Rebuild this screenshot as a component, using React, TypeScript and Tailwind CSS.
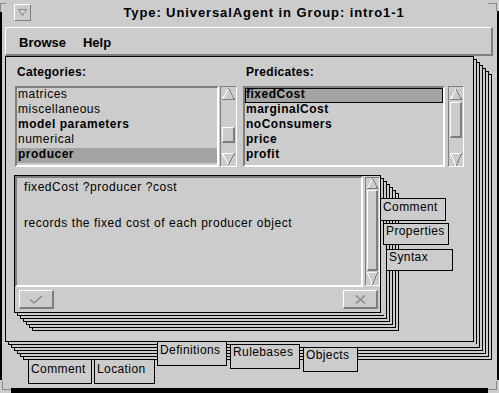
import React from "react";

function UpArrow({ w, h }: { w: number; h: number }) {
  return (
    <svg width={w} height={h} viewBox={`0 0 ${w} ${h}`} className="block" shapeRendering="crispEdges">
      <line x1={w / 2} y1={0} x2={0.5} y2={h - 0.5} stroke="#ffffff" />
      <line x1={w / 2} y1={0} x2={w - 0.5} y2={h - 0.5} stroke="#7f7f7f" />
      <line x1={0} y1={h - 0.5} x2={w} y2={h - 0.5} stroke="#7f7f7f" />
    </svg>
  );
}

function DownArrow({ w, h }: { w: number; h: number }) {
  return (
    <svg width={w} height={h} viewBox={`0 0 ${w} ${h}`} className="block" shapeRendering="crispEdges">
      <line x1={0} y1={0.5} x2={w} y2={0.5} stroke="#ffffff" />
      <line x1={0.5} y1={0.5} x2={w / 2} y2={h} stroke="#ffffff" />
      <line x1={w - 0.5} y1={0.5} x2={w / 2} y2={h} stroke="#7f7f7f" />
    </svg>
  );
}

function Tab({ className, label }: { className: string; label: string }) {
  return (
    <div
      className={
        "absolute border border-black bg-[#cccccc] pl-[2px] text-[12px] leading-[13px] tracking-[0.4px] whitespace-nowrap " +
        className
      }
    >
      {label}
    </div>
  );
}

export default function App() {
  const page = "border border-black bg-[#cccccc]";
  return (
    <div className="relative w-[499px] h-[393px] overflow-hidden bg-[#cccccc] text-black font-['Liberation_Sans',Arial,sans-serif]">
      <div className="flex flex-col w-[499px] h-[393px] box-border border-l-2 border-r-2 border-b-[5px] border-black">
        {/* title bar */}
        <div className="h-[27px] flex shrink-0">
          <div className="ml-[12px] mt-[4px] w-[17px] h-[17px] border border-t-white border-l-white border-r-[#7f7f7f] border-b-[#7f7f7f] flex items-center justify-center">
            <svg width="9" height="7" viewBox="0 0 9 7" shapeRendering="crispEdges">
              <path d="M0.5 0.5 H8.5 L4.5 6.5 Z" fill="none" stroke="#8a8a8a" />
            </svg>
          </div>
          <div className="flex-1 text-center mt-[5px] text-[13px] leading-[15px] font-bold tracking-[0.9px] whitespace-nowrap">
            Type: UniversalAgent in Group: intro1-1
          </div>
        </div>

        {/* menubar */}
        <div className="ml-[3px] w-[488px] h-[29px] shrink-0 box-border border-t border-l border-t-white border-l-white border-b-2 border-r-2 border-b-[#7f7f7f] border-r-[#7f7f7f] flex items-start text-[13px] font-bold leading-[15px]">
          <span className="ml-[13px] mt-[7px]">Browse</span>
          <span className="ml-[17px] mt-[7px]">Help</span>
        </div>

        {/* outer notebook */}
        <div className="ml-[3px] relative w-[488px] h-[332px] shrink-0">
          <div className={"absolute left-[18px] top-[18px] w-[469px] h-[286px] " + page} />
          <div className={"absolute left-[15px] top-[15px] w-[469px] h-[286px] " + page} />
          <div className={"absolute left-[12px] top-[12px] w-[469px] h-[286px] " + page} />
          <div className={"absolute left-[9px] top-[9px] w-[469px] h-[286px] " + page} />
          <div className={"absolute left-[6px] top-[6px] w-[469px] h-[286px] " + page} />
          <div className={"absolute left-[3px] top-[3px] w-[469px] h-[286px] " + page} />

          {/* front page */}
          <div className={"relative w-[469px] h-[286px] box-border " + page}>
            <div className="flex ml-[9px]">
              {/* categories */}
              <div className="w-[222px]">
                <div className="h-[29px] pl-[2px] pt-[8px] text-[12px] font-bold leading-[15px] tracking-[0.3px]">
                  Categories:
                </div>
                <div className="flex gap-[1px]">
                  <div className="w-[204px] h-[81px] box-border border-2 border-t-[#7f7f7f] border-l-[#7f7f7f] border-b-white border-r-white text-[12px] tracking-[0.5px] whitespace-nowrap overflow-hidden">
                    <div className="h-[15px] leading-[12px] pl-[1px]">matrices</div>
                    <div className="h-[15px] leading-[12px] pl-[1px]">miscellaneous</div>
                    <div className="h-[15px] leading-[12px] pl-[1px] font-bold">model parameters</div>
                    <div className="h-[15px] leading-[12px] pl-[1px]">numerical</div>
                    <div className="h-[15px] leading-[12px] pl-[1px] font-bold bg-[#a3a3a3]">producer</div>
                  </div>
                  <div className="w-[17px] h-[81px] box-border border border-t-[#7f7f7f] border-l-[#7f7f7f] border-b-white border-r-white flex flex-col items-center">
                    <div className="mt-[1px]">
                      <UpArrow w={13} h={12} />
                    </div>
                    <div className="mt-[27px] w-[13px] h-[16px] box-border border-t border-l border-t-white border-l-white border-b-2 border-r-2 border-b-[#7f7f7f] border-r-[#7f7f7f]" />
                    <div className="flex-1" />
                    <div className="mb-[1px]">
                      <DownArrow w={13} h={12} />
                    </div>
                  </div>
                </div>
              </div>

              {/* predicates */}
              <div className="w-[221px] ml-[6px]">
                <div className="h-[29px] pl-[3px] pt-[8px] text-[12px] font-bold leading-[15px] tracking-[0.3px]">
                  Predicates:
                </div>
                <div className="flex gap-[3px]">
                  <div className="w-[202px] h-[81px] box-border border-2 border-t-[#7f7f7f] border-l-[#7f7f7f] border-b-white border-r-white text-[12px] font-bold tracking-[0.5px] whitespace-nowrap overflow-hidden">
                    <div className="h-[15px] leading-[10px] border border-black bg-[#a3a3a3]">fixedCost</div>
                    <div className="h-[15px] leading-[12px] pl-[1px]">marginalCost</div>
                    <div className="h-[15px] leading-[12px] pl-[1px]">noConsumers</div>
                    <div className="h-[15px] leading-[12px] pl-[1px]">price</div>
                    <div className="h-[15px] leading-[12px] pl-[1px]">profit</div>
                  </div>
                  <div className="w-[16px] h-[81px] box-border border border-t-[#7f7f7f] border-l-[#7f7f7f] border-b-white border-r-white flex flex-col items-center">
                    <div className="mt-[2px]">
                      <UpArrow w={12} h={11} />
                    </div>
                    <div className="mt-[2px] w-[12px] h-[36px] box-border border-t border-l border-t-white border-l-white border-b-2 border-r-2 border-b-[#7f7f7f] border-r-[#7f7f7f]" />
                    <div className="flex-1" />
                    <div>
                      <DownArrow w={12} h={13} />
                    </div>
                  </div>
                </div>
              </div>
            </div>

            {/* inner notebook */}
            <div className="relative ml-[8px] mt-[8px] w-[446px] h-[156px]">
              <div className={"absolute left-[18px] top-[18px] w-[367px] h-[138px] " + page} />
              <div className={"absolute left-[15px] top-[15px] w-[367px] h-[138px] " + page} />
              <div className={"absolute left-[12px] top-[12px] w-[367px] h-[138px] " + page} />
              <div className={"absolute left-[9px] top-[9px] w-[367px] h-[138px] " + page} />
              <div className={"absolute left-[6px] top-[6px] w-[367px] h-[138px] " + page} />
              <div className={"absolute left-[3px] top-[3px] w-[367px] h-[138px] " + page} />

              <div className={"relative w-[367px] h-[138px] box-border flex flex-col " + page}>
                <div className="flex h-[111px]">
                  <div className="w-[348px] h-[111px] box-border border-2 border-t-[#7f7f7f] border-l-[#7f7f7f] border-b-white border-r-white pl-[7px] text-[12px] leading-[18px] tracking-[0.55px] whitespace-nowrap">
                    <div>fixedCost ?producer ?cost</div>
                    <div className="h-[18px]" />
                    <div>records the fixed cost of each producer object</div>
                  </div>
                  <div className="ml-[2px] mt-[1px] w-[15px] h-[109px] box-border border border-t-[#7f7f7f] border-l-[#7f7f7f] border-b-white border-r-white flex flex-col items-center">
                    <UpArrow w={11} h={11} />
                    <div className="mt-[1px] w-[11px] flex-1 box-border border-t border-l border-t-white border-l-white border-b-2 border-r-2 border-b-[#7f7f7f] border-r-[#7f7f7f]" />
                    <div className="mt-[1px]">
                      <DownArrow w={11} h={13} />
                    </div>
                  </div>
                </div>
                <div className="flex justify-between h-[25px]">
                  <div className="ml-[4px] mt-[3px] w-[35px] h-[19px] box-border border-t border-l border-t-white border-l-white border-b-2 border-r-2 border-b-[#7f7f7f] border-r-[#7f7f7f] flex items-center justify-center">
                    <svg width="14" height="9" viewBox="0 0 14 9">
                      <path d="M1 4.5 L5 8 L13 1" fill="none" stroke="#8c8c8c" strokeWidth="1.4" />
                    </svg>
                  </div>
                  <div className="mr-[2px] mt-[3px] w-[35px] h-[19px] box-border border-t border-l border-t-white border-l-white border-b-2 border-r-2 border-b-[#7f7f7f] border-r-[#7f7f7f] flex items-center justify-center">
                    <svg width="11" height="9" viewBox="0 0 11 9">
                      <path d="M1 0.5 L10 8.5 M10 0.5 L1 8.5" fill="none" stroke="#8c8c8c" strokeWidth="1.6" />
                    </svg>
                  </div>
                </div>
              </div>

              <div className="absolute left-[369px] top-[70px] w-[1px] h-[70px] bg-[#cccccc]" />
              <Tab className="left-[366px] top-[23px] w-[66px] h-[23px] pt-[2px]" label="Comment" />
              <Tab className="left-[369px] top-[48px] w-[66px] h-[22px] pt-[1px]" label="Properties" />
              <Tab className="left-[372px] top-[74px] w-[67px] h-[22px] pt-[1px]" label="Syntax" />
            </div>
          </div>

          <div className="absolute left-[295px] top-[288px] w-[177px] h-[1px] bg-[#cccccc]" />
          <Tab className="left-[23px] top-[303px] w-[64px] h-[25px] pt-[3px]" label="Comment" />
          <Tab className="left-[89px] top-[303px] w-[61px] h-[25px] pt-[3px]" label="Location" />
          <Tab className="left-[152px] top-[285px] w-[70px] h-[25px] pt-[2px]" label="Definitions" />
          <Tab className="left-[225px] top-[288px] w-[70px] h-[25px] pt-[1px]" label="Rulebases" />
          <Tab className="left-[298px] top-[291px] w-[55px] h-[25px] pt-[1px]" label="Objects" />
        </div>
      </div>

      {/* window frame corners */}
      <div className="absolute left-0 top-0 w-[2px] h-[12px] bg-[#cccccc]" />
      <svg className="absolute left-0 top-0" width="8" height="14" viewBox="0 0 8 14" shapeRendering="crispEdges">
        <path d="M0.5 12 V3.5 H6" fill="none" stroke="#8a8a8a" />
      </svg>
      <div className="absolute right-0 top-0 w-[2px] h-[11px] bg-[#cccccc]" />
      <svg className="absolute right-0 top-0" width="12" height="12" viewBox="0 0 12 12" shapeRendering="crispEdges">
        <path d="M1 3.5 H9.5 V11" fill="none" stroke="#8a8a8a" />
      </svg>
      <div className="absolute left-0 bottom-0 w-[11px] h-[13px] bg-[#cccccc]" />
      <svg className="absolute left-0 bottom-0" width="12" height="13" viewBox="0 0 12 13" shapeRendering="crispEdges">
        <path d="M2.5 1 V9.5 H11" fill="none" stroke="#8a8a8a" />
      </svg>
      <div className="absolute right-0 bottom-0 w-[11px] h-[13px] bg-[#cccccc]" />
      <svg className="absolute right-0 bottom-0" width="12" height="13" viewBox="0 0 12 13" shapeRendering="crispEdges">
        <path d="M9.5 1 V9.5 H1" fill="none" stroke="#8a8a8a" />
      </svg>
    </div>
  );
}
